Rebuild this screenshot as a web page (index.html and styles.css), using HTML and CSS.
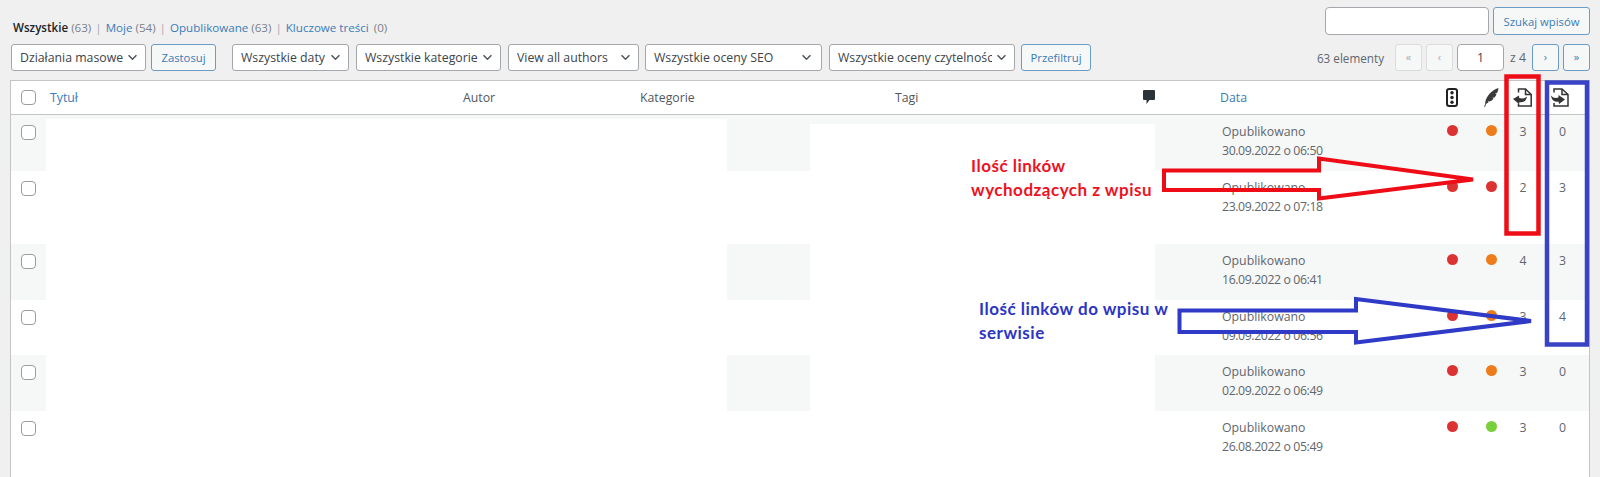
FILE: index.html
```html
<!DOCTYPE html>
<html lang="pl">
<head>
<meta charset="utf-8">
<title>Wpisy</title>
<link rel="stylesheet" href="styles.css">
</head>
<body>
<div class="page">
  <div class="topbar">
    <ul class="views">
      <li><strong>Wszystkie</strong> <span class="count">(63)</span></li>
      <li class="sep">|</li>
      <li><a>Moje</a> <span class="count">(54)</span></li>
      <li class="sep">|</li>
      <li><a>Opublikowane</a> <span class="count">(63)</span></li>
      <li class="sep">|</li>
      <li><a>Kluczowe treści</a> <span class="count count-gap">(0)</span></li>
    </ul>
    <div class="search">
      <div class="input search-input"></div>
      <div class="btn search-btn">Szukaj wpisów</div>
    </div>
  </div>

  <div class="toolbar">
    <div class="select s-bulk"><span>Działania masowe</span><svg class="chev" viewBox="0 0 12 8"><path d="M1.5 1.5 6 6l4.5-4.5"/></svg></div>
    <div class="btn b-apply">Zastosuj</div>
    <div class="select s-date"><span>Wszystkie daty</span><svg class="chev" viewBox="0 0 12 8"><path d="M1.5 1.5 6 6l4.5-4.5"/></svg></div>
    <div class="select s-cat"><span>Wszystkie kategorie</span><svg class="chev" viewBox="0 0 12 8"><path d="M1.5 1.5 6 6l4.5-4.5"/></svg></div>
    <div class="select s-auth"><span>View all authors</span><svg class="chev" viewBox="0 0 12 8"><path d="M1.5 1.5 6 6l4.5-4.5"/></svg></div>
    <div class="select s-seo"><span>Wszystkie oceny SEO</span><svg class="chev" viewBox="0 0 12 8"><path d="M1.5 1.5 6 6l4.5-4.5"/></svg></div>
    <div class="select s-read"><span>Wszystkie oceny czytelności</span><svg class="chev" viewBox="0 0 12 8"><path d="M1.5 1.5 6 6l4.5-4.5"/></svg></div>
    <div class="btn b-filter">Przefiltruj</div>
    <div class="pagination">
      <span class="total">63 elementy</span>
      <div class="pg off">«</div>
      <div class="pg off">‹</div>
      <div class="input pg-input">1</div>
      <span class="of">z 4</span>
      <div class="pg">›</div>
      <div class="pg">»</div>
    </div>
  </div>

  <div class="table">
    <div class="thead">
      <div class="cell-cb"><i class="cb"></i></div>
      <a class="th th-link">Tytuł</a>
      <div class="th">Autor</div>
      <div class="th">Kategorie</div>
      <div class="th">Tagi</div>
      <div class="th th-icon">
        <svg class="i-comment" viewBox="0 0 12 14"><path d="M1 0h10a1 1 0 0 1 1 1v8a1 1 0 0 1-1 1H6.500L3.500 14V10H1a1 1 0 0 1-1-1V1a1 1 0 0 1 1-1z"/></svg>
      </div>
      <a class="th th-link">Data</a>
      <div class="ic">
        <svg class="i-seo" viewBox="0 0 12 19"><rect x="1" y="1" width="10" height="17" rx="2.200"/><circle cx="6" cy="4.800" r="1.700"/><circle cx="6" cy="9.500" r="1.700"/><circle cx="6" cy="14.200" r="1.700"/></svg>
      </div>
      <div class="ic">
        <svg class="i-feather" viewBox="0 0 15 19"><path d="M14.500 0C14.300 2 13.800 3.500 13 5L11 5.500l1.500.8C12 7.500 11.500 8.500 10.500 9.500L8.500 9.800l1 .9C8.500 12 7 13 5.500 13.500L3.800 13.300l.7 1C3.500 15 2.800 15.500 2 16L1 19 .2 18.700 1.200 15.500C1.500 9 7 2.500 14.500 0z"/></svg>
      </div>
      <div class="ic ic-out">
        <svg class="i-link" viewBox="0 0 19 19"><path class="doc" d="M5.500 4.500V1h7l5.700 5.500V18H5.500v-2.500"/><path class="doc" d="M12.500 1v5.500h5.700"/><path d="M14 8.500c-.5 4-3.500 6.500-7.500 5.500L6 16 0 11 6 7.500l.2 2.500c2.800 1 5.800.5 7.800-1.500z"/></svg>
      </div>
      <div class="ic ic-in">
        <svg class="i-link" viewBox="0 0 19 19"><path class="doc" d="M3 4.500V1h8l6 5.500V18H3v-3"/><path class="doc" d="M11 1v5.500h6"/><path d="M0 7.500c2 2.500 4.500 3 7.500 2V7L14 11.500 8 16l-.5-2.500C3.500 14.500.5 12 0 7.500z"/></svg>
      </div>
    </div>

    <div class="row stripe r1">
      <div class="cell-cb"><i class="cb"></i></div>
      <div class="mask m-left"></div><div></div><div class="mask m-right"></div>
      <div class="date">Opublikowano<br><span class="when">30.09.2022 o 06:50</span></div>
      <div class="dot red"></div><div class="dot orange"></div><div class="num">3</div><div class="num">0</div>
    </div>
    <div class="row r2">
      <div class="cell-cb"><i class="cb"></i></div>
      <div class="mask"></div><div></div><div class="mask"></div>
      <div class="date">Opublikowano<br><span class="when">23.09.2022 o 07:18</span></div>
      <div class="dot red"></div><div class="dot red"></div><div class="num">2</div><div class="num">3</div>
    </div>
    <div class="row stripe r3">
      <div class="cell-cb"><i class="cb"></i></div>
      <div class="mask"></div><div></div><div class="mask"></div>
      <div class="date">Opublikowano<br><span class="when">16.09.2022 o 06:41</span></div>
      <div class="dot red"></div><div class="dot orange"></div><div class="num">4</div><div class="num">3</div>
    </div>
    <div class="row r4">
      <div class="cell-cb"><i class="cb"></i></div>
      <div class="mask"></div><div></div><div class="mask"></div>
      <div class="date">Opublikowano<br><span class="when">09.09.2022 o 06:56</span></div>
      <div class="dot red"></div><div class="dot orange"></div><div class="num">3</div><div class="num">4</div>
    </div>
    <div class="row stripe r5">
      <div class="cell-cb"><i class="cb"></i></div>
      <div class="mask"></div><div></div><div class="mask"></div>
      <div class="date">Opublikowano<br><span class="when">02.09.2022 o 06:49</span></div>
      <div class="dot red"></div><div class="dot orange"></div><div class="num">3</div><div class="num">0</div>
    </div>
    <div class="row r6">
      <div class="cell-cb"><i class="cb"></i></div>
      <div class="mask"></div><div></div><div class="mask"></div>
      <div class="date">Opublikowano<br><span class="when">26.08.2022 o 05:49</span></div>
      <div class="dot red"></div><div class="dot green"></div><div class="num">3</div><div class="num">0</div>
    </div>
  </div>
</div>

<svg class="overlay" viewBox="0 0 1600 477">
  <rect class="mark-red" x="1506.500" y="76.500" width="32" height="157"/>
  <rect class="mark-blue" x="1547" y="82.500" width="40" height="262"/>
  <path class="arrow-red" d="M1164 170.500H1319V158.500L1473 179.500 1319 198.500V190H1164z"/>
  <path class="arrow-blue" d="M1179.500 310.500H1356V299L1531 321 1356 342.500V332H1179.500z"/>
</svg>
<p class="note note-red">Ilość linków<br>wychodzących z wpisu</p>
<p class="note note-blue">Ilość linków do wpisu w<br>serwisie</p>
</body>
</html>
```
FILE: styles.css
```css
* { box-sizing: border-box; }
html, body { margin: 0; padding: 0; height: 477px; overflow: hidden; }
body {
  background: #f0f0f1;
  color: #5f666d;
  font-family: "Open Sans", "Noto Sans", "Liberation Sans", sans-serif;
  font-size: 12.300px;
  position: relative;
}
a { color: #3a7cb6; text-decoration: none; }

.page { padding: 7px 10px 0; }

.topbar { display: flex; justify-content: space-between; height: 28px; }
.views { display: flex; gap: 4px; list-style: none; margin: 0; padding: 12px 0 0 3px; line-height: 18px; font-size: 11.600px; }
.views strong { color: #1d2327; font-weight: 600; }
.sep { color: #a7aaad; }
.count { color: #7a8087; }
.count-gap { margin-left: 2px; }
.search { display: flex; gap: 4px; }

.input { background: #fff; border: 1px solid #a4a7ab; border-radius: 4px; }
.search-input { width: 164px; height: 28px; }
.btn {
  display: flex; align-items: center; justify-content: center;
  background: #f6f7f7; color: #3a7cb6;
  border: 1px solid #6c9cc6; border-radius: 3px;
  height: 27px; font-size: 11.300px;
}
.search-btn { width: 97px; height: 28px; }

.toolbar { display: flex; align-items: center; margin-top: 9px; height: 27px; padding-left: 1px; }
.select {
  display: flex; align-items: center; justify-content: space-between;
  background: #fff; color: #3c434a;
  border: 1px solid #a4a7ab; border-radius: 3px;
  height: 27px; padding: 0 7px 0 8px;
  white-space: nowrap;
}
.select span { overflow: hidden; }
.chev { width: 11px; height: 7px; flex: none; }
.chev path { fill: none; stroke: #50575e; stroke-width: 1.800; }

.s-bulk { width: 135px; }
.b-apply { width: 65px; margin-left: 5px; }
.s-date { width: 117px; margin-left: 16px; }
.s-cat { width: 145px; margin-left: 7px; }
.s-auth { width: 131px; margin-left: 7px; }
.s-seo { width: 177px; margin-left: 6px; padding-right: 9px; }
.s-read { width: 186px; margin-left: 7px; padding-right: 7px; }
.s-read span { width: 154px; }
.b-filter { width: 70px; margin-left: 6px; }

.pagination { display: flex; align-items: center; margin-left: auto; }
.total { margin-right: 11px; font-size: 11.700px; }
.pg {
  display: flex; align-items: center; justify-content: center;
  width: 27px; height: 27px; margin-left: 4px;
  background: #f6f7f7; color: #3a7cb6;
  border: 1px solid #6c9cc6; border-radius: 3px;
  font-size: 11px; padding-bottom: 2px;
}
.total + .pg { margin-left: 0; }
.pg.off { color: #a7aaad; border-color: #dcdcde; background: #f6f7f7; }
.pg-input {
  display: flex; align-items: center; justify-content: center;
  width: 47px; height: 27px; margin-left: 4px; color: #3c434a;
}
.of { margin: 0 2px 0 6px; }

.table {
  margin-top: 9px;
  height: 400px;
  background: #fff;
  border: 1px solid #c3c4c7;
  border-bottom: 0;
}
.thead {
  display: grid;
  grid-template-columns: 35px 413px 177px 255px 248px 77px 216px 40px 38px 26px 1fr;
  align-items: center;
  height: 34px;
  border-bottom: 1px solid #c3c4c7;
  color: #50575e;
}
.th { padding-left: 4px; }
.th-link { color: #3a7cb6; }
.th-icon { display: flex; }
.ic { display: flex; justify-content: center; }
.cell-cb { padding-left: 10px; display: flex; }
.cb { display: block; width: 15px; height: 15px; background: #fff; border: 1px solid #999ca1; border-radius: 4px; }

.i-comment { width: 12px; height: 14px; margin-top: -2px; fill: #2c3338; }
.i-seo { width: 12px; height: 19px; margin-top: -1px; fill: #222; }
.i-seo rect { fill: none; stroke: #222; stroke-width: 2; }
.i-feather { width: 15px; height: 19px; margin-top: -1px; fill: #3a3a3a; }
.i-link { width: 19px; height: 19px; margin-top: -1px; fill: #333; }
.i-link .doc { fill: none; stroke: #333; stroke-width: 1.500; }
.ic-out { margin-left: -1px; }
.ic-in { justify-content: flex-start; padding-left: 15px; }

.row {
  display: grid;
  grid-template-columns: 35px 681px 83px 345px 277px 40px 38px 26px 1fr;
  background: #fff;
}
.stripe { background: #f6f7f7; }
.r1 { height: 56px; }
.r2 { height: 73px; }
.r3 { height: 56px; }
.r4 { height: 55px; }
.r5 { height: 56px; }
.r6 { height: 66px; }
.row .cell-cb { padding-top: 10px; }
.mask { background: #fff; }
.m-left { margin-top: 4px; }
.m-right { margin-top: 9px; }

.date { padding: 8px 0 0 67px; line-height: 18.500px; }
.when { letter-spacing: -.4px; }
.dot { width: 11px; height: 11px; border-radius: 50%; margin: 10px auto 0; }
.red { background: #dc3232; }
.orange { background: #ee7c1b; }
.green { background: #7ad03a; }
.num { text-align: center; padding-top: 8px; line-height: 18px; }

.overlay { position: absolute; left: 0; top: 0; width: 1600px; height: 477px; pointer-events: none; }
.overlay rect, .overlay path { fill: none; }
.mark-red { stroke: #ee0d17; stroke-width: 4.500; }
.mark-blue { stroke: #3a43c4; stroke-width: 4.500; }
.arrow-red { stroke: #ee0d17; stroke-width: 4; }
.arrow-blue { stroke: #2f3ac6; stroke-width: 4; }

.note {
  position: absolute; margin: 0;
  font-family: Lato, "Open Sans", sans-serif;
  font-weight: 700; font-size: 17px; letter-spacing: .5px; line-height: 24px;
  white-space: nowrap;
}
.note-red { left: 971px; top: 154px; color: #ee1122; }
.note-blue { left: 979px; top: 297px; color: #2b35c4; }
```
